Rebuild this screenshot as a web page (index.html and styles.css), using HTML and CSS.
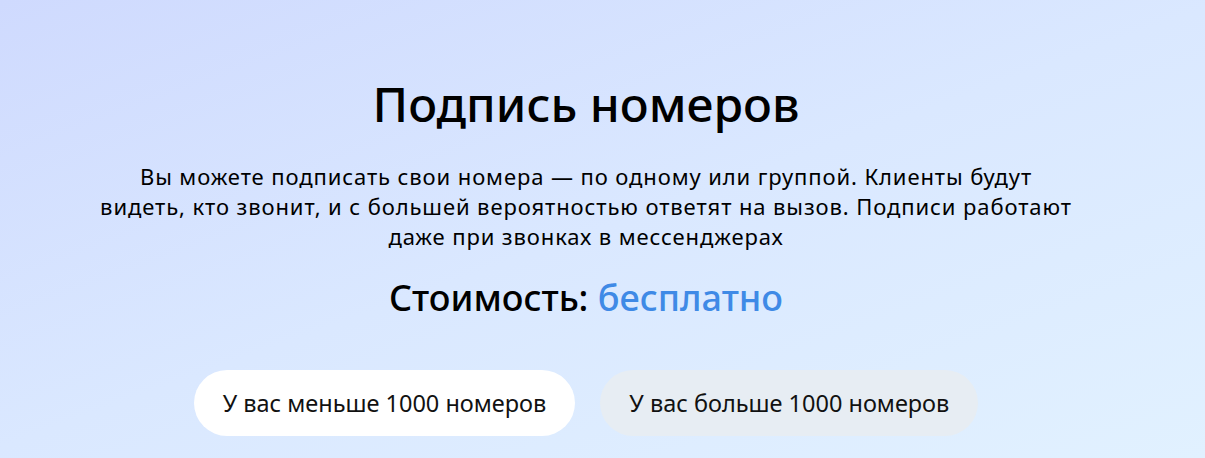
FILE: index.html
```html
<!DOCTYPE html>
<html lang="ru">
<head>
    <meta charset="UTF-8">
    <meta name="viewport" content="width=device-width, initial-scale=1.0">
    <title>Подпись номеров</title>
    <link rel="stylesheet" href="styles.css">
</head>
<body>
    <section class="promo">
        <h1 class="promo-title">Подпись номеров</h1>
        <p class="promo-text">Вы можете подписать свои номера — по одному или группой. Клиенты будут видеть, кто звонит, и с большей вероятностью ответят на вызов. Подписи работают даже при звонках в мессенджерах</p>
        <p class="promo-price">Стоимость: <span class="free">бесплатно</span></p>
        <div class="tabs">
            <button class="tab active">У вас меньше 1000 номеров</button>
            <button class="tab">У вас больше 1000 номеров</button>
        </div>
    </section>
</body>
</html>
```

FILE: styles.css
```css
body {
    margin: 0;
    height: 458px;
    overflow: hidden;
    font-family: "Noto Sans", "Open Sans", Arial, sans-serif;
    color: #000;
    background: linear-gradient(160deg, #cfdafe 0%, #dae8ff 50%, #e1f1ff 100%);
}
.promo {
    display: flex;
    flex-direction: column;
    align-items: center;
    padding: 72px 33px 0 0;
    text-align: center;
}
.promo-title {
    margin: 0;
    font-size: 48px;
    font-weight: 500;
    line-height: 64px;
}
.promo-text {
    width: 975px;
    margin: 25px 0 0;
    font-size: 22px;
    letter-spacing: 0.9px;
    line-height: 30px;
    color: #000;
}
.promo-price {
    margin: 25px 0 0;
    font-size: 36px;
    font-weight: 500;
    line-height: 44px;
}
.free {
    color: #3f8ae6;
}
.tabs {
    display: flex;
    gap: 25px;
    margin-top: 50px;
}
.tab {
    height: 66px;
    padding: 0 29px;
    border: none;
    border-radius: 33px;
    font-family: inherit;
    font-size: 23.5px;
    color: #111;
    background: #e7edf3;
    cursor: pointer;
}
.tab.active {
    background: #fff;
}
```
